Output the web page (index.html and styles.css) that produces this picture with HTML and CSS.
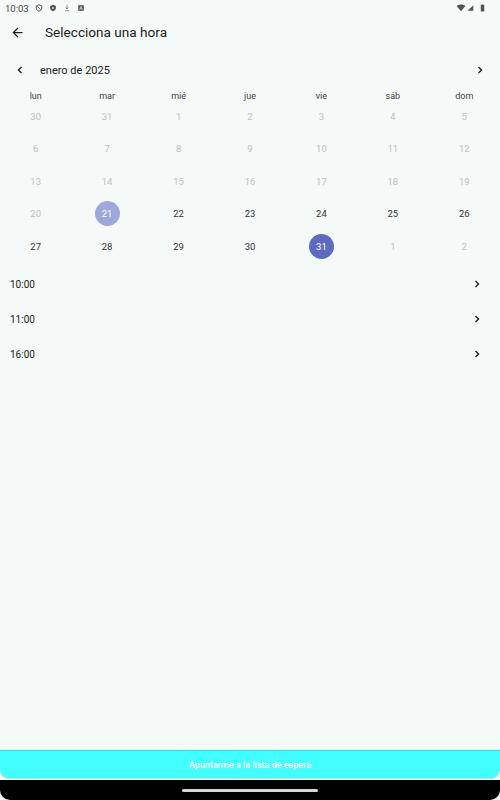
FILE: index.html
```html
<!DOCTYPE html>
<html>
 <head>
	<title>Selecciona una hora</title>
	<link rel="stylesheet" href="styles.css">
 </head>
 <body>
	<div class="screen">
		<div class="status">
			<span class="clock">10:03</span>
			<svg class="sicon" viewBox="0 0 10 10"><path d="M5 1 L8.5 2.4 V5 C8.5 7 7 8.4 5 9 C3 8.4 1.5 7 1.5 5 V2.4 Z" fill="none" stroke="#555" stroke-width="1.2"/><path d="M3 3 L7 7" stroke="#555" stroke-width="1"/></svg>
			<svg class="sicon" viewBox="0 0 10 10"><path d="M5 1 L8.7 2.4 V5 C8.7 7 7 8.5 5 9.2 C3 8.5 1.3 7 1.3 5 V2.4 Z" fill="#555"/><path d="M4.2 3.4 L6.6 5 L4.2 6.6 Z" fill="#f4faf8"/></svg>
			<svg class="sicon" viewBox="0 0 10 10"><path d="M5 1 V6 M3.2 4.4 L5 6.2 L6.8 4.4 M2.6 8.4 H7.4" fill="none" stroke="#666" stroke-width="0.9"/></svg>
			<svg class="sicon" viewBox="0 0 10 10"><rect x="1.5" y="1.5" width="7" height="7" fill="#555"/><path d="M3.3 7.2 L5 3 L6.7 7.2 M4 5.8 H6" fill="none" stroke="#f4faf8" stroke-width="0.8"/></svg>
			<span class="grow"></span>
			<div class="sysicons">
				<svg class="wifi" viewBox="0 0 12 10"><path d="M0.5 2.5 C3.5 0 8.5 0 11.5 2.5 L6 9 Z" fill="#555"/></svg>
				<svg class="signal" viewBox="0 0 10 10"><path d="M9 1 V9 H1 Z" fill="#555"/></svg>
				<svg class="battery" viewBox="0 0 6 10"><rect x="1.8" y="0.5" width="2.4" height="1" fill="#555"/><rect x="0.8" y="1.3" width="4.4" height="8" rx="0.5" fill="#555"/></svg>
			</div>
		</div>

		<div class="appbar">
			<svg class="back" viewBox="0 0 24 24"><path d="M20 11H7.83l5.59-5.59L12 4l-8 8 8 8 1.41-1.41L7.83 13H20v-2z" fill="#1c1c1c"/></svg>
			<span class="title">Selecciona una hora</span>
		</div>

		<div class="month">
			<svg class="chev" viewBox="0 0 10 10"><path d="M6.5 2 L3.5 5 L6.5 8" fill="none" stroke="#1c1c1c" stroke-width="1.4"/></svg>
			<span class="mname">enero de 2025</span>
			<span class="grow"></span>
			<svg class="chev" viewBox="0 0 10 10"><path d="M3.5 2 L6.5 5 L3.5 8" fill="none" stroke="#1c1c1c" stroke-width="1.4"/></svg>
		</div>

		<div class="weekdays">
			<span>lun</span><span>mar</span><span>mié</span><span>jue</span><span>vie</span><span>sáb</span><span>dom</span>
		</div>

		<div class="days">
			<span class="out">30</span><span class="out">31</span><span class="out">1</span><span class="out">2</span><span class="out">3</span><span class="out">4</span><span class="out">5</span>
			<span class="out">6</span><span class="out">7</span><span class="out">8</span><span class="out">9</span><span class="out">10</span><span class="out">11</span><span class="out">12</span>
			<span class="out">13</span><span class="out">14</span><span class="out">15</span><span class="out">16</span><span class="out">17</span><span class="out">18</span><span class="out">19</span>
			<span class="out">20</span><span><b class="today">21</b></span><span>22</span><span>23</span><span>24</span><span>25</span><span>26</span>
			<span>27</span><span>28</span><span>29</span><span>30</span><span><b class="picked">31</b></span><span class="out">1</span><span class="out">2</span>
		</div>

		<div class="times">
			<div class="slot"><span>10:00</span><svg class="chev" viewBox="0 0 10 10"><path d="M3.5 2 L6.5 5 L3.5 8" fill="none" stroke="#1c1c1c" stroke-width="1.4"/></svg></div>
			<div class="slot"><span>11:00</span><svg class="chev" viewBox="0 0 10 10"><path d="M3.5 2 L6.5 5 L3.5 8" fill="none" stroke="#1c1c1c" stroke-width="1.4"/></svg></div>
			<div class="slot"><span>16:00</span><svg class="chev" viewBox="0 0 10 10"><path d="M3.5 2 L6.5 5 L3.5 8" fill="none" stroke="#1c1c1c" stroke-width="1.4"/></svg></div>
		</div>

		<div class="grow"></div>

		<div class="waitlist">Apuntarme a la lista de espera</div>

		<div class="navbar"><span class="handle"></span></div>
	</div>
 </body>
</html>
```

FILE: styles.css
```css
	body {
		margin: 0;
		background: #000;
		font-family: Roboto, "Noto Sans", sans-serif;
	}
	.screen {
		display: flex;
		flex-direction: column;
		width: 500px;
		height: 800px;
		background: #f4faf8;
		color: #1c1c1c;
	}
	.grow {
		flex: 1;
	}
	.status {
		display: flex;
		align-items: center;
		height: 16px;
		padding: 0 0 0 5px;
		gap: 6px;
	}
	.clock {
		font-size: 9.5px;
		color: #444;
		margin-right: 0;
	}
	.sicon {
		width: 8px;
		height: 8px;
	}
	.sysicons {
		display: flex;
		align-items: center;
		width: 44px;
		gap: 1px;
	}
	.wifi {
		width: 10px;
		height: 8px;
	}
	.signal {
		width: 7px;
		height: 8px;
	}
	.battery {
		width: 5px;
		height: 8px;
		margin-left: 5px;
	}
	.appbar {
		display: flex;
		align-items: center;
		height: 32px;
		padding-left: 10px;
	}
	.back {
		width: 15px;
		height: 15px;
	}
	.title {
		margin-left: 20px;
		font-size: 13.6px;
	}
	.month {
		display: flex;
		align-items: center;
		height: 24px;
		margin-top: 10px;
		padding: 0 15px;
	}
	.chev {
		width: 10px;
		height: 10px;
	}
	.mname {
		margin-left: 15px;
		font-size: 11px;
	}
	.weekdays {
		display: grid;
		grid-template-columns: repeat(7, 1fr);
		height: 20px;
		margin-top: 4px;
		align-items: center;
		text-align: center;
		font-size: 9px;
		color: #444;
	}
	.days {
		display: grid;
		grid-template-columns: repeat(7, 1fr);
		grid-auto-rows: 32.5px;
		margin-top: -6px;
		align-items: center;
		justify-items: center;
		font-size: 9.5px;
		color: #333;
	}
	.days .out {
		color: #c0c0c0;
	}
	.days b {
		display: flex;
		align-items: center;
		justify-content: center;
		width: 25px;
		height: 25px;
		border-radius: 50%;
		font-weight: normal;
		color: #fff;
	}
	.today {
		background: #9fa8da;
	}
	.picked {
		background: #5c6bc0;
	}
	.times {
		margin-top: 4px;
	}
	.slot {
		display: flex;
		align-items: center;
		justify-content: space-between;
		height: 35px;
		padding: 0 18px 0 10px;
		font-size: 10px;
		color: #222;
	}
	.waitlist {
		height: 27px;
		line-height: 29px;
		background: #40fffe;
		border-top: 1px solid #10ecec;
		border-radius: 0 0 9px 9px;
		box-shadow: 0 1px 1px rgba(0,120,120,0.25);
		text-align: center;
		color: #fff;
		font-size: 9px;
		font-weight: 500;
		margin-bottom: 2px;
	}
	.navbar {
		display: flex;
		justify-content: center;
		align-items: center;
		height: 20px;
		background: #000;
		border-radius: 0 0 10px 10px;
	}
	.handle {
		width: 136px;
		height: 3px;
		border-radius: 2px;
		background: #d6d6d6;
	}
```
